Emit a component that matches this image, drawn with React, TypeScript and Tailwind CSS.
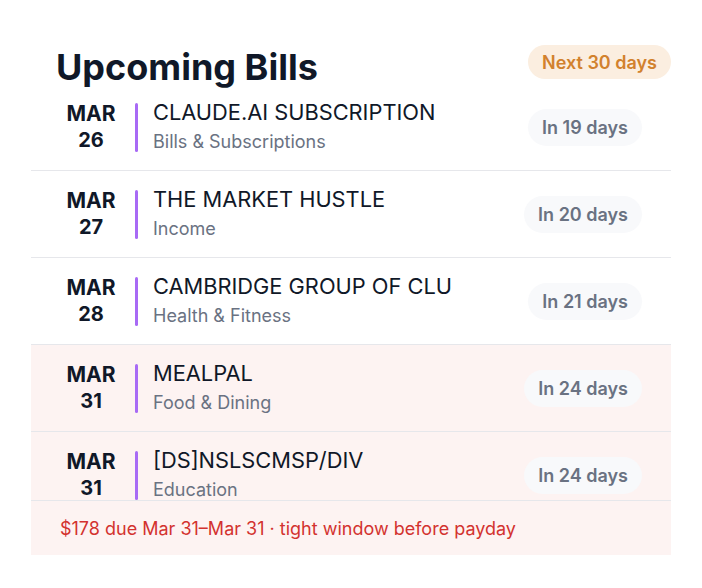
import React from 'react';

type Bill = {
  month: string;
  day: string;
  name: string;
  category: string;
  due: string;
  tight?: boolean;
};

const bills: Bill[] = [
  { month: 'MAR', day: '26', name: 'CLAUDE.AI SUBSCRIPTION', category: 'Bills & Subscriptions', due: 'In 19 days' },
  { month: 'MAR', day: '27', name: 'THE MARKET HUSTLE', category: 'Income', due: 'In 20 days' },
  { month: 'MAR', day: '28', name: 'CAMBRIDGE GROUP OF CLU', category: 'Health & Fitness', due: 'In 21 days' },
  { month: 'MAR', day: '31', name: 'MEALPAL', category: 'Food & Dining', due: 'In 24 days', tight: true },
  { month: 'MAR', day: '31', name: '[DS]NSLSCMSP/DIV', category: 'Education', due: 'In 24 days', tight: true },
];

const BillRow: React.FC<{ bill: Bill }> = ({ bill }) => (
  <div
    className={`flex h-[87px] shrink-0 items-center border-b border-[#e6e7eb] pl-6 pr-[29px] ${
      bill.tight ? 'bg-[#fdf3f2]' : ''
    }`}
  >
    <div className="flex w-[72px] flex-col items-center font-bold leading-[26px] text-gray-900">
      <span className="text-[21px]">{bill.month}</span>
      <span className="text-[20px]">{bill.day}</span>
    </div>
    <div className="ml-2 h-[49px] w-[3px] rounded-full bg-[#a86af5]" />
    <div className="ml-[15px] flex flex-1 flex-col">
      <span className="text-[21.8px] leading-[28px] text-gray-900">{bill.name}</span>
      <span className="mt-[2px] text-[18px] leading-[28px] text-gray-500">{bill.category}</span>
    </div>
    <span className="rounded-full bg-[#f8f9fb] px-[14px] py-[7px] text-[18px] font-semibold leading-[23px] text-gray-500">
      {bill.due}
    </span>
  </div>
);

export default function App() {
  return (
    <div
      className="min-h-screen bg-white pt-10"
      style={{ fontFamily: 'Inter, "Noto Sans", sans-serif' }}
    >
      <div className="ml-[31px] w-[640px]">
        <div className="relative z-10 flex h-[44px] items-start justify-between">
          <h1 className="mt-[7px] pl-[25px] text-[36px] font-bold leading-[40px] text-gray-900">
            Upcoming Bills
          </h1>
          <span className="mt-[5px] flex h-[34px] items-center rounded-full bg-[#fbeee0] px-[14px] text-[18px] font-semibold text-[#d2812d]">
            Next 30 days
          </span>
        </div>
        <div className="flex h-[416px] flex-col overflow-hidden">
          {bills.map((b, i) => (
            <BillRow key={i} bill={b} />
          ))}
        </div>
        <div className="flex h-[55px] items-center border-t border-[#e6e7eb] bg-[#fdf3f2] pl-[29px] text-[18px] text-[#d3322f]">
          $178 due Mar 31–Mar 31 · tight window before payday
        </div>
      </div>
    </div>
  );
}
